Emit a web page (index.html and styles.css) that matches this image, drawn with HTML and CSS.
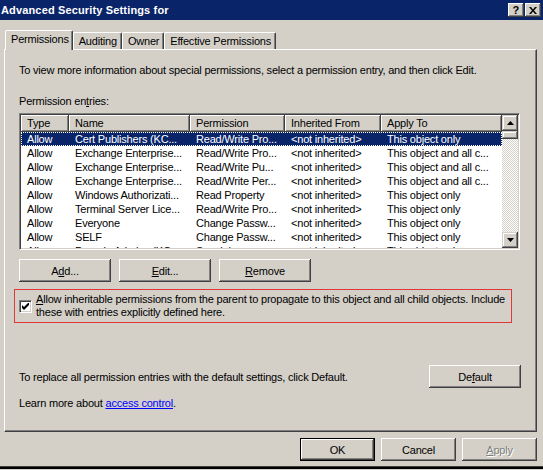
FILE: index.html
```html
<!DOCTYPE html>
<html>
<head>
<meta charset="utf-8">
<link rel="stylesheet" href="styles.css">
</head>
<body>
<div class="window">
  <div class="titlebar">
    <span class="title">Advanced Security Settings for</span>
    <span class="tb-btn">?</span>
    <span class="tb-btn close">
      <svg width="8" height="7" viewBox="0 0 8 7"><path d="M0 0h2l2 2.5L6 0h2L5 3.5 8 7H6L4 4.5 2 7H0l3-3.5z" fill="#000"/></svg>
    </span>
  </div>

  <div class="tabs">
    <div class="tab active">Permissions</div>
    <div class="tab">Auditing</div>
    <div class="tab">Owner</div>
    <div class="tab">Effective Permissions</div>
  </div>

  <div class="panel">
    <p class="intro">To view more information about special permissions, select a permission entry, and then click Edit.</p>
    <p class="label">Permission en<u>t</u>ries:</p>

    <div class="listbox">
      <div class="list-main">
        <div class="row header">
          <div class="hcell">Type</div>
          <div class="hcell">Name</div>
          <div class="hcell">Permission</div>
          <div class="hcell">Inherited From</div>
          <div class="hcell">Apply To</div>
        </div>
        <div class="rows">
          <div class="row item selected">
            <div class="cell">Allow</div><div class="cell">Cert Publishers (KC...</div><div class="cell">Read/Write Pro...</div><div class="cell">&lt;not inherited&gt;</div><div class="cell">This object only</div>
          </div>
          <div class="row item">
            <div class="cell">Allow</div><div class="cell">Exchange Enterprise...</div><div class="cell">Read/Write Pro...</div><div class="cell">&lt;not inherited&gt;</div><div class="cell">This object and all c...</div>
          </div>
          <div class="row item">
            <div class="cell">Allow</div><div class="cell">Exchange Enterprise...</div><div class="cell">Read/Write Pu...</div><div class="cell">&lt;not inherited&gt;</div><div class="cell">This object and all c...</div>
          </div>
          <div class="row item">
            <div class="cell">Allow</div><div class="cell">Exchange Enterprise...</div><div class="cell">Read/Write Per...</div><div class="cell">&lt;not inherited&gt;</div><div class="cell">This object and all c...</div>
          </div>
          <div class="row item">
            <div class="cell">Allow</div><div class="cell">Windows Authorizati...</div><div class="cell">Read Property</div><div class="cell">&lt;not inherited&gt;</div><div class="cell">This object only</div>
          </div>
          <div class="row item">
            <div class="cell">Allow</div><div class="cell">Terminal Server Lice...</div><div class="cell">Read/Write Pro...</div><div class="cell">&lt;not inherited&gt;</div><div class="cell">This object only</div>
          </div>
          <div class="row item">
            <div class="cell">Allow</div><div class="cell">Everyone</div><div class="cell">Change Passw...</div><div class="cell">&lt;not inherited&gt;</div><div class="cell">This object only</div>
          </div>
          <div class="row item">
            <div class="cell">Allow</div><div class="cell">SELF</div><div class="cell">Change Passw...</div><div class="cell">&lt;not inherited&gt;</div><div class="cell">This object only</div>
          </div>
          <div class="row item">
            <div class="cell">Allow</div><div class="cell">Domain Admins (KC...</div><div class="cell">Special</div><div class="cell">&lt;not inherited&gt;</div><div class="cell">This object only</div>
          </div>
        </div>
      </div>
      <div class="scrollbar">
        <div class="sb-btn"><svg width="7" height="4" viewBox="0 0 7 4"><path d="M3.5 0L7 4H0z" fill="#000"/></svg></div>
        <div class="sb-thumb"></div>
        <div class="sb-track"></div>
        <div class="sb-btn"><svg width="7" height="4" viewBox="0 0 7 4"><path d="M0 0h7L3.5 4z" fill="#000"/></svg></div>
      </div>
    </div>

    <div class="btn-row">
      <div class="btn">A<u>d</u>d...</div>
      <div class="btn"><u>E</u>dit...</div>
      <div class="btn"><u>R</u>emove</div>
    </div>

    <div class="inherit">
      <div class="checkbox">
        <svg width="7" height="7" viewBox="0 0 7 7"><path d="M0 2v3l2 2 5-5V-1L2 4z" fill="#000"/></svg>
      </div>
      <div class="inherit-text"><u>A</u>llow inheritable permissions from the parent to propagate to this object and all child objects. Include<br>these with entries explicitly defined here.</div>
    </div>

    <div class="default-row">
      <p class="default-text">To replace all permission entries with the default settings, click Default.</p>
      <div class="btn wide">De<u>f</u>ault</div>
    </div>

    <p class="learn">Learn more about <a href="#">access control</a>.</p>
  </div>

  <div class="footer">
    <div class="btn dlg default-btn">OK</div>
    <div class="btn dlg">Cancel</div>
    <div class="btn dlg disabled"><u>A</u>pply</div>
  </div>
</div>
<div class="under"></div>
</body>
</html>
```
FILE: styles.css
```css
* { box-sizing: border-box; }
html, body { margin: 0; padding: 0; }
body {
  width: 543px;
  height: 470px;
  overflow: hidden;
  background: #d4d0c8;
  font-family: "Liberation Sans", Arial, sans-serif;
  font-size: 11px;
  letter-spacing: -0.2px;
  color: #000;
}
p { margin: 0; }

.window { height: 467px; border-bottom: 1px solid #404040; }

.titlebar {
  height: 20px;
  background: #0a246a;
  color: #fff;
  font-weight: bold;
  font-size: 11px;
  letter-spacing: 0.15px;
  display: flex;
  align-items: center;
  padding: 0 2px 0 1px;
}
.title { flex: 1; }
.tb-btn {
  width: 16px;
  height: 14px;
  background: #d4d0c8;
  color: #000;
  font-size: 11px;
  font-weight: bold;
  display: flex;
  align-items: center;
  justify-content: center;
  box-shadow: inset -1px -1px #404040, inset 1px 1px #fff, inset -2px -2px #808080, inset 2px 2px #d4d0c8;
}
.tb-btn.close { margin-left: 1px; }

.tabs {
  display: flex;
  align-items: flex-end;
  height: 29px;
  padding-left: 5px;
  position: relative;
  z-index: 2;
}
.tab {
  height: 17px;
  line-height: 13px;
  padding: 2px 4px 0 5px;
  border-top: 1px solid #fff;
  border-left: 1px solid #fff;
  border-right: 1px solid #404040;
  box-shadow: inset -1px 0 #808080;
  border-radius: 2px 2px 0 0;
}
.tab.active {
  height: 20px;
  margin-bottom: -1px;
  background: #d4d0c8;
  padding: 2px 3px 0 5px;
}

.panel {
  margin: 0 6px 0 4px;
  height: 383px;
  border-top: 1px solid #fff;
  border-left: 1px solid #fff;
  border-right: 1px solid #404040;
  border-bottom: 1px solid #404040;
  box-shadow: inset -1px -1px #808080;
  padding: 14px 14px 0 14px;
  position: relative;
  z-index: 1;
}
.intro { line-height: 13px; }
.label { line-height: 13px; margin-top: 18px; }

.listbox {
  margin-top: 5px;
  width: 501px;
  height: 137px;
  display: flex;
  border-top: 1px solid #808080;
  border-left: 1px solid #808080;
  border-right: 1px solid #fff;
  border-bottom: 1px solid #fff;
  box-shadow: inset 1px 1px #404040, inset -1px -1px #d4d0c8;
  padding: 1px;
  background: #fff;
}
.list-main { flex: 1; overflow: hidden; }
.row {
  display: grid;
  grid-template-columns: 48px 121px 95px 96px 121px;
}
.header { height: 17px; }
.hcell {
  background: #d4d0c8;
  line-height: 16px;
  padding-left: 6px;
  box-shadow: inset -1px -1px #404040, inset 1px 1px #fff, inset -2px -2px #808080;
}
.item { height: 14px; line-height: 14px; }
.cell { padding-left: 6px; white-space: nowrap; overflow: hidden; }
.item.selected {
  background: #0a246a;
  color: #fff;
  outline: 1px dotted #fff;
  outline-offset: -1px;
}

.scrollbar {
  width: 16px;
  display: flex;
  flex-direction: column;
}
.sb-btn, .sb-thumb {
  width: 16px;
  height: 16px;
  background: #d4d0c8;
  display: flex;
  align-items: center;
  justify-content: center;
  box-shadow: inset -1px -1px #404040, inset 1px 1px #d4d0c8, inset -2px -2px #808080, inset 2px 2px #fff;
}
.sb-thumb { height: 8px; }
.sb-track {
  flex: 1;
  background-color: #fff;
  background-image: conic-gradient(#d4d0c8 25%, #fff 0 50%, #d4d0c8 0 75%, #fff 0);
  background-size: 2px 2px;
}

.btn-row { display: flex; gap: 8px; margin-top: 9px; }
.btn {
  width: 92px;
  height: 23px;
  display: flex;
  align-items: center;
  justify-content: center;
  background: #d4d0c8;
  box-shadow: inset -1px -1px #404040, inset 1px 1px #fff, inset -2px -2px #808080, inset 2px 2px #d4d0c8;
}

.inherit {
  margin: 7px 0 0 -5px;
  width: 498px;
  height: 34px;
  border: 1px solid #e0383a;
  display: flex;
  align-items: center;
  padding-left: 4px;
  gap: 4px;
}
.checkbox {
  width: 13px;
  height: 13px;
  flex: none;
  background: #fff;
  border-top: 1px solid #808080;
  border-left: 1px solid #808080;
  border-right: 1px solid #fff;
  border-bottom: 1px solid #fff;
  box-shadow: inset 1px 1px #404040, inset -1px -1px #d4d0c8;
  display: flex;
  align-items: center;
  justify-content: center;
}
.inherit-text { line-height: 13px; white-space: nowrap; }

.default-row {
  display: flex;
  justify-content: space-between;
  align-items: center;
  margin-top: 42px;
  width: 502px;
}
.btn.wide { width: 92px; }
.learn { margin-top: 9px; line-height: 13px; }
.learn a { color: #0000ff; }

.footer {
  display: flex;
  justify-content: flex-end;
  gap: 6px;
  padding: 6px 6px 0 0;
}
.btn.dlg { width: 75px; }
.btn.default-btn {
  border: 1px solid #000;
  box-shadow: inset -1px -1px #404040, inset 1px 1px #fff, inset -2px -2px #808080;
}
.btn.disabled { color: #808080; text-shadow: 1px 1px #fff; }

.under { height: 2px; background: #000; }
```
